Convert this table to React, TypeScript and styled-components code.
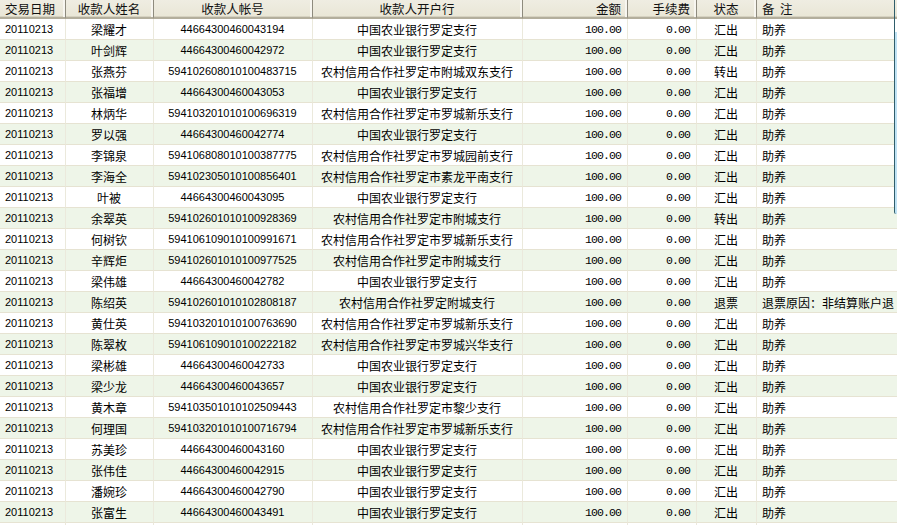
import React from "react";
import styled, { createGlobalStyle } from "styled-components";

const Global = createGlobalStyle`
  html, body { margin: 0; padding: 0; background: #ffffff; overflow: hidden; }
  body { font-family: "Liberation Sans", "Noto Sans CJK SC", sans-serif; color: #000; }
`;

const COLS = "66px 88px 159px 210px 105px 69px 60px 220px";

const Frame = styled.div`
  width: 897px;
  height: 525px;
  overflow: hidden;
  position: relative;
`;

const Grid = styled.div`
  display: grid;
  grid-template-columns: ${COLS};
  width: max-content;
`;

type Align = "left" | "center" | "right";

const HeadCell = styled.div<{ $align: Align }>`
  box-sizing: border-box;
  height: 19px;
  display: flex;
  align-items: center;
  justify-content: ${(p) => (p.$align === "left" ? "flex-start" : p.$align === "right" ? "flex-end" : "center")};
  padding: 0 6px 0 5px;
  background: linear-gradient(#efede2, #e9e6d6);
  border-bottom: 2px solid #b3ae9c;
  border-right: 1px solid #8e8b7e;
  box-shadow: inset -2px 0 0 #f7f6f0, inset 0 -1px 0 #d6d2c1;
  font-family: "Noto Sans CJK SC", sans-serif;
  font-size: 12.5px;
  color: #111;
  white-space: nowrap;
  overflow: hidden;
`;

const Cell = styled.div<{ $align: Align; $alt: boolean; $kind: "num" | "cjk" | "mono" }>`
  box-sizing: border-box;
  height: 21px;
  display: flex;
  align-items: center;
  justify-content: ${(p) => (p.$align === "left" ? "flex-start" : p.$align === "right" ? "flex-end" : "center")};
  padding: 0 6px 0 5px;
  background: ${(p) => (p.$alt ? "#eef5e8" : "#ffffff")};
  border-right: 1px solid #ebe9dc;
  border-bottom: 1px solid #e6e3d2;
  font-family: ${(p) =>
    p.$kind === "mono"
      ? '"Liberation Mono", monospace'
      : p.$kind === "num"
      ? '"Liberation Sans", sans-serif'
      : '"Noto Sans CJK SC", sans-serif'};
  font-size: ${(p) => (p.$kind === "mono" ? "11.5px" : p.$kind === "num" ? "11px" : "12px")};
  letter-spacing: ${(p) => (p.$kind === "mono" ? "-0.9px" : "0")};
  color: #000;
  white-space: nowrap;
  overflow: ${(p) => (p.$align === "left" ? "visible" : "hidden")};
`;

const WindowEdge = styled.div`
  position: absolute;
  left: 894px;
  top: 0;
  width: 3px;
  height: 214px;
  border-left: 1px solid #2f5d6b;
  border-bottom-left-radius: 2px;
  box-sizing: border-box;
  background: linear-gradient(to bottom, transparent 0 32px, #bfe2f4 32px 100%);
`;

type Row = [string, string, string, string, string];

const ABC = "中国农业银行罗定支行";
const rows: Row[] = [
  ["梁耀才", "44664300460043194", ABC, "汇出", "助养"],
  ["叶剑辉", "44664300460042972", ABC, "汇出", "助养"],
  ["张燕芬", "594102608010100483715", "农村信用合作社罗定市附城双东支行", "转出", "助养"],
  ["张福增", "44664300460043053", ABC, "汇出", "助养"],
  ["林炳华", "594103201010100696319", "农村信用合作社罗定市罗城新乐支行", "汇出", "助养"],
  ["罗以强", "44664300460042774", ABC, "汇出", "助养"],
  ["李锦泉", "594106808010100387775", "农村信用合作社罗定市罗城园前支行", "汇出", "助养"],
  ["李海全", "594102305010100856401", "农村信用合作社罗定市素龙平南支行", "汇出", "助养"],
  ["叶被", "44664300460043095", ABC, "汇出", "助养"],
  ["余翠英", "594102601010100928369", "农村信用合作社罗定市附城支行", "转出", "助养"],
  ["何树钦", "594106109010100991671", "农村信用合作社罗定市罗城新乐支行", "汇出", "助养"],
  ["辛辉炬", "594102601010100977525", "农村信用合作社罗定市附城支行", "汇出", "助养"],
  ["梁伟雄", "44664300460042782", ABC, "汇出", "助养"],
  ["陈绍英", "594102601010102808187", "农村信用合作社罗定附城支行", "退票", "退票原因：非结算账户退"],
  ["黄仕英", "594103201010100763690", "农村信用合作社罗定市罗城新乐支行", "汇出", "助养"],
  ["陈翠枚", "594106109010100222182", "农村信用合作社罗定市罗城兴华支行", "汇出", "助养"],
  ["梁彬雄", "44664300460042733", ABC, "汇出", "助养"],
  ["梁少龙", "44664300460043657", ABC, "汇出", "助养"],
  ["黄木章", "594103501010102509443", "农村信用合作社罗定市黎少支行", "汇出", "助养"],
  ["何理国", "594103201010100716794", "农村信用合作社罗定市罗城新乐支行", "汇出", "助养"],
  ["苏美珍", "44664300460043160", ABC, "汇出", "助养"],
  ["张伟佳", "44664300460042915", ABC, "汇出", "助养"],
  ["潘婉珍", "44664300460042790", ABC, "汇出", "助养"],
  ["张富生", "44664300460043491", ABC, "汇出", "助养"],
];

const headers: [string, Align][] = [
  ["交易日期", "left"],
  ["收款人姓名", "center"],
  ["收款人帐号", "center"],
  ["收款人开户行", "center"],
  ["金额", "right"],
  ["手续费", "right"],
  ["状态", "center"],
  ["备\u00a0\u00a0注", "left"],
];

const colKinds: Align[] = ["left", "center", "center", "center", "right", "right", "center", "left"];

export default function App() {
  return (
    <Frame>
      <Global />
      <Grid>
        {headers.map(([h, a]) => (
          <HeadCell key={h} $align={a}>
            {h}
          </HeadCell>
        ))}
        {rows.map((r, i) => {
          const alt = i % 2 === 1;
          return (
            <React.Fragment key={i}>
              <Cell $align="left" $alt={alt} $kind="num">20110213</Cell>
              <Cell $align="center" $alt={alt} $kind="cjk">{r[0]}</Cell>
              <Cell $align="center" $alt={alt} $kind="num">{r[1]}</Cell>
              <Cell $align="center" $alt={alt} $kind="cjk">{r[2]}</Cell>
              <Cell $align="right" $alt={alt} $kind="mono">100.00</Cell>
              <Cell $align="right" $alt={alt} $kind="mono">0.00</Cell>
              <Cell $align="center" $alt={alt} $kind="cjk">{r[3]}</Cell>
              <Cell $align="left" $alt={alt} $kind="cjk">{r[4]}</Cell>
            </React.Fragment>
          );
        })}
        {colKinds.map((a, j) => (
          <Cell key={`empty-${j}`} $align={a} $alt={false} $kind="cjk" />
        ))}
      </Grid>
      <WindowEdge />
    </Frame>
  );
}
